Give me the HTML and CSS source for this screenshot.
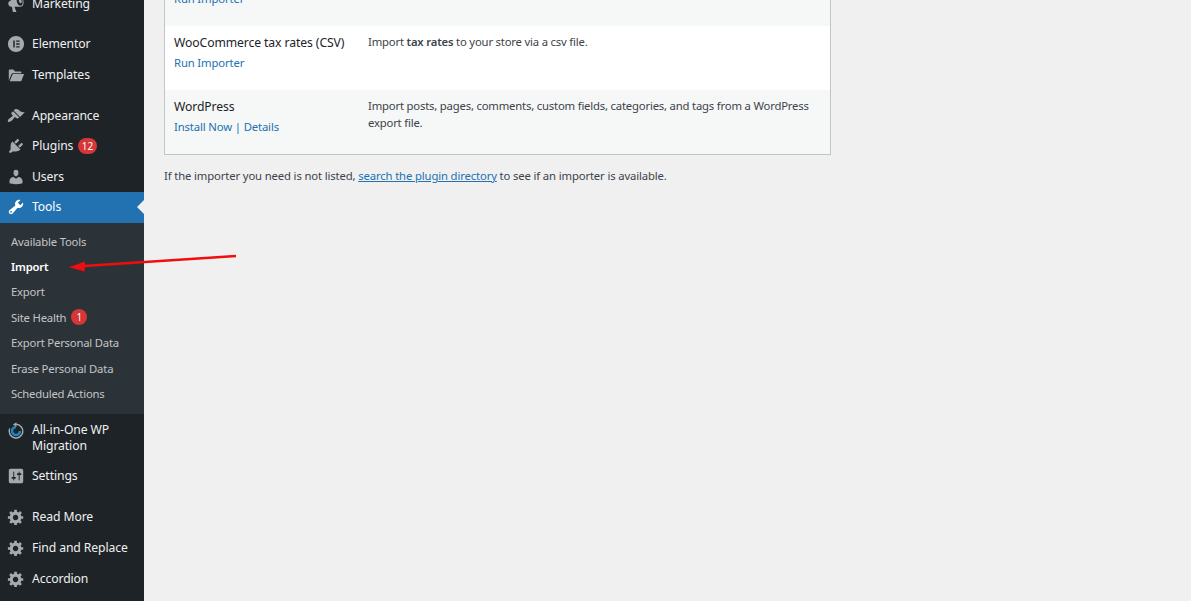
FILE: index.html
```html
<!DOCTYPE html>
<html lang="en">
<head>
<meta charset="utf-8">
<title>Import</title>
<link rel="stylesheet" href="styles.css">
</head>
<body>
<div class="page">
  <nav class="sidebar">
    <ul class="menu">
      <li class="item first"><svg class="ico" viewBox="0 0 20 20"><path d="M18.15 5.94c.46 1.62.38 3.22-.02 4.48-.42 1.28-1.26 2.18-2.3 2.48-.16.06-.26.06-.4.06-.06.02-.12.02-.18.02-.06.02-.14.02-.22.02h-6.8l2.22 5.5c.02.14-.06.26-.14.34-.08.1-.24.16-.34.16H6.95c-.1 0-.26-.06-.34-.16-.08-.08-.16-.2-.14-.34l-1-5.5H4.25l-.02-.02c-.5.06-1.08-.18-1.54-.62s-.88-1.08-1.06-1.88c-.24-.8-.2-1.56-.02-2.2.18-.62.58-1.08 1.06-1.3l.02-.02 9-5.4c.1-.06.18-.1.24-.16.06-.04.14-.08.24-.12.16-.08.28-.12.5-.18 1.04-.3 2.24.1 3.22 1 .98.88 1.8 2.24 2.26 3.86zm-2.58 5.98h-.02c.4-.1.74-.34 1.04-.7.58-.7.86-1.76.86-3.04-.02-.64-.12-1.3-.3-2-.2-.7-.44-1.36-.78-1.92-.34-.56-.7-1.02-1.1-1.38-.8-.72-1.72-1.04-2.54-.82-.82.22-1.44.96-1.74 1.98-.14.52-.22 1.1-.22 1.74.02.64.12 1.32.3 2 .2.7.46 1.36.78 1.9.34.56.72 1.02 1.12 1.38.4.34.82.58 1.24.7.46.14.9.16 1.36.06v.1zm-2.24-5.04c-.14-.54-.1-1.12.06-1.5.16-.4.44-.66.84-.72.4-.08.82.12 1.2.5.38.36.7.94.86 1.56.16.64.14 1.2-.04 1.6-.16.38-.44.64-.84.72-.4.06-.82-.14-1.2-.5-.38-.38-.7-.96-.88-1.66z"/></svg><span>Marketing</span></li>
      <li class="item gap"><svg class="ico" viewBox="0 0 20 20"><path fill-rule="evenodd" d="M10 1a9 9 0 1 0 0 18 9 9 0 0 0 0-18zM7 6h1.6v8H7zm3.2 0H14v1.6h-3.8zm0 3.2H14v1.6h-3.8zm0 3.2H14V14h-3.8z"/></svg><span>Elementor</span></li>
      <li class="item"><svg class="ico" viewBox="0 0 20 20"><path d="M2 16V5c0-.6.4-1 1-1h4l2 2h6c.6 0 1 .4 1 1v1H6.4c-.6 0-1.1.3-1.3.8z"/><path d="M3 17l3-7.3c.1-.4.5-.7.9-.7H19l-3 7.3c-.1.4-.5.7-.9.7z"/></svg><span>Templates</span></li>
      <li class="item gap2"><svg class="ico" viewBox="0 0 20 20"><path d="M14.48 11.06L7.41 3.99l1.5-1.5c.5-.56 2.3-.47 3.51.32 1.21.8 1.43 1.28 2.91 2.1 1.18.64 2.45 1.26 4.45.85zm-.71.71L6.7 4.7 4.93 6.47c-.39.39-.39 1.02 0 1.41l1.06 1.06c.39.39.39 1.03 0 1.42-.6.6-1.43 1.11-2.21 1.69-.35.26-.7.53-1.01.84C1.43 13.23.4 15.75 1.1 16.45c.7.7 3.22-.33 4.56-1.67.31-.31.58-.66.84-1.01.58-.78 1.09-1.61 1.69-2.21.39-.39 1.02-.39 1.41 0l1.06 1.06c.39.39 1.02.39 1.41 0z"/></svg><span>Appearance</span></li>
      <li class="item"><svg class="ico" viewBox="0 0 20 20"><path d="M13.11 4.36L9.87 7.6 8 5.73l3.24-3.24c.35-.34 1.05-.2 1.56.32.52.51.66 1.21.31 1.55zm-8 1.77l.91-1.12 9.01 9.01-1.19.84c-.71.71-2.63 1.16-3.82 1.16H6.14L4.9 17.26c-.59.59-1.54.59-2.12 0-.59-.58-.59-1.53 0-2.12l1.24-1.24v-3.88c0-1.13.4-3.19 1.09-3.89zm7.26 3.97l3.24-3.24c.34-.35 1.04-.21 1.55.31.52.51.66 1.21.31 1.55l-3.24 3.25z"/></svg><span>Plugins</span><b class="badge">12</b></li>
      <li class="item"><svg class="ico" viewBox="0 0 20 20"><path d="M10 9.25c-2.27 0-2.73-3.44-2.73-3.44C7 4.02 7.82 2 9.97 2c2.16 0 2.98 2.02 2.71 3.81 0 0-.41 3.44-2.68 3.44zm0 2.57L12.72 10c2.39 0 4.52 2.33 4.52 4.53v2.49s-3.65 1.13-7.24 1.13c-3.65 0-7.24-1.13-7.24-1.13v-2.49c0-2.25 1.94-4.48 4.47-4.48z"/></svg><span>Users</span></li>
      <li class="item current"><svg class="ico" viewBox="0 0 20 20"><path d="M16.68 9.77c-1.34 1.34-3.3 1.67-4.95.99l-5.41 6.52c-.99.99-2.59.99-3.58 0s-.99-2.59 0-3.57l6.52-5.42c-.68-1.65-.35-3.61.99-4.95 1.28-1.28 3.12-1.62 4.72-1.06l-2.89 2.89 2.82 2.82 2.86-2.87c.53 1.58.18 3.39-1.08 4.65zM3.81 16.21c.4.39 1.04.39 1.43 0 .4-.4.4-1.04 0-1.43-.39-.4-1.03-.4-1.43 0-.39.39-.39 1.03 0 1.43z"/></svg><span>Tools</span></li>
    </ul>
    <ul class="sub">
      <li>Available Tools</li>
      <li class="on">Import</li>
      <li>Export</li>
      <li>Site Health<b class="badge round">1</b></li>
      <li>Export Personal Data</li>
      <li>Erase Personal Data</li>
      <li>Scheduled Actions</li>
    </ul>
    <ul class="menu">
      <li class="item tall"><svg class="ico" viewBox="0 0 20 20"><path class="ring" d="M10 2.6a7.6 7.6 0 1 1-7 4.6"/><path d="M10.5.2 6.6 2.8l3.9 2.4z"/><path class="arc" d="M10 5.6a4.4 4.4 0 1 0 4.4 4.4"/></svg><span>All-in-One WP Migration</span></li>
      <li class="item"><svg class="ico" viewBox="0 0 20 20"><path d="M18 16V4c0-1.1-.9-2-2-2H4c-1.1 0-2 .9-2 2v12c0 1.1.9 2 2 2h12c1.1 0 2-.9 2-2zM8 11h1c.55 0 1 .45 1 1s-.45 1-1 1H8v1.5c0 .28-.22.5-.5.5s-.5-.22-.5-.5V13H6c-.55 0-1-.45-1-1s.45-1 1-1h1V5.5c0-.28.22-.5.5-.5s.5.22.5.5V11zm5-2h-1c-.55 0-1-.45-1-1s.45-1 1-1h1V5.5c0-.28.22-.5.5-.5s.5.22.5.5V7h1c.55 0 1 .45 1 1s-.45 1-1 1h-1v5.5c0 .28-.22.5-.5.5s-.5-.22-.5-.5V9z"/></svg><span>Settings</span></li>
      <li class="item gap3"><svg class="ico" viewBox="0 0 20 20"><path d="M18 12h-2.18c-.17.7-.44 1.35-.81 1.93l1.54 1.54-2.1 2.1-1.54-1.54c-.58.36-1.23.63-1.91.79V19H8v-2.18c-.68-.16-1.33-.43-1.91-.79l-1.54 1.54-2.12-2.12 1.54-1.54c-.36-.58-.63-1.23-.79-1.91H1V9.03h2.17c.16-.7.44-1.35.8-1.94L2.43 5.55l2.1-2.1 1.54 1.54c.58-.37 1.24-.64 1.93-.81V2h3v2.18c.68.16 1.33.43 1.91.79l1.54-1.54 2.12 2.12-1.54 1.54c.36.59.64 1.24.8 1.94H18V12zm-8.5 1.5c1.66 0 3-1.34 3-3s-1.34-3-3-3-3 1.34-3 3 1.34 3 3 3z"/></svg><span>Read More</span></li>
      <li class="item"><svg class="ico" viewBox="0 0 20 20"><path d="M18 12h-2.18c-.17.7-.44 1.35-.81 1.93l1.54 1.54-2.1 2.1-1.54-1.54c-.58.36-1.23.63-1.91.79V19H8v-2.18c-.68-.16-1.33-.43-1.91-.79l-1.54 1.54-2.12-2.12 1.54-1.54c-.36-.58-.63-1.23-.79-1.91H1V9.03h2.17c.16-.7.44-1.35.8-1.94L2.43 5.55l2.1-2.1 1.54 1.54c.58-.37 1.24-.64 1.93-.81V2h3v2.18c.68.16 1.33.43 1.91.79l1.54-1.54 2.12 2.12-1.54 1.54c.36.59.64 1.24.8 1.94H18V12zm-8.5 1.5c1.66 0 3-1.34 3-3s-1.34-3-3-3-3 1.34-3 3 1.34 3 3 3z"/></svg><span>Find and Replace</span></li>
      <li class="item"><svg class="ico" viewBox="0 0 20 20"><path d="M18 12h-2.18c-.17.7-.44 1.35-.81 1.93l1.54 1.54-2.1 2.1-1.54-1.54c-.58.36-1.23.63-1.91.79V19H8v-2.18c-.68-.16-1.33-.43-1.91-.79l-1.54 1.54-2.12-2.12 1.54-1.54c-.36-.58-.63-1.23-.79-1.91H1V9.03h2.17c.16-.7.44-1.35.8-1.94L2.43 5.55l2.1-2.1 1.54 1.54c.58-.37 1.24-.64 1.93-.81V2h3v2.18c.68.16 1.33.43 1.91.79l1.54-1.54 2.12 2.12-1.54 1.54c.36.59.64 1.24.8 1.94H18V12zm-8.5 1.5c1.66 0 3-1.34 3-3s-1.34-3-3-3-3 1.34-3 3 1.34 3 3 3z"/></svg><span>Accordion</span></li>
    </ul>
  </nav>
  <main class="main">
    <div class="table">
      <div class="row alt">
        <div class="name"><span class="title">WooCommerce products (CSV)</span><a class="link">Run Importer</a></div>
        <p class="desc">Import <strong>products</strong> to your store via a csv file.</p>
      </div>
      <div class="row">
        <div class="name"><span class="title">WooCommerce tax rates (CSV)</span><a class="link">Run Importer</a></div>
        <p class="desc">Import <strong>tax rates</strong> to your store via a csv file.</p>
      </div>
      <div class="row alt">
        <div class="name"><span class="title">WordPress</span><span class="actions"><a class="link">Install Now</a> | <a class="link">Details</a></span></div>
        <p class="desc">Import posts, pages, comments, custom fields, categories, and tags from a WordPress export file.</p>
      </div>
    </div>
    <p class="note">If the importer you need is not listed, <a class="under">search the plugin directory</a> to see if an importer is available.</p>
  </main>
  <svg class="arrow" viewBox="0 0 240 24" width="240" height="24"><path class="shaft" d="M236 3 84 13"/><path d="M69 14.2 85 8.5 84.6 18.5z"/></svg>
</div>
</body>
</html>
```

FILE: styles.css
```css
* { box-sizing: border-box; }
html, body { margin: 0; height: 100%; overflow: hidden; }
body { background: #f0f0f1; font-family: "Noto Sans", "Open Sans", sans-serif; font-size: 11.3px; letter-spacing: -0.14px; color: #3c434a; }
ul { list-style: none; margin: 0; padding: 0; }
.page { display: flex; position: relative; height: 601px; overflow: hidden; }
.sidebar { width: 144px; height: 601px; flex: none; background: #1d2327; overflow: hidden; }
.menu:first-child { margin-top: -11.2px; }
.item { display: flex; align-items: center; min-height: 30.6px; color: #f0f0f1; font-size: 12.2px; letter-spacing: -0.1px; line-height: 16px; padding-left: 7px; position: relative; }
.item.gap { margin-top: 9.5px; }
.item.gap2 { margin-top: 10.2px; }
.item.gap3 { margin-top: 10.3px; }
.item.tall { padding-top: 8px; padding-bottom: 7.5px; align-items: flex-start; }
.item.tall span { width: 100px; }
.ico { width: 18px; height: 18px; fill: #a7aaad; flex: none; margin-right: 7px; }
.ring { fill: none; stroke: #a7aaad; stroke-width: 1.6; }
.arc { fill: none; stroke: #1b86c4; stroke-width: 2.8; }
.current { background: #2271b1; color: #fff; }
.current .ico { fill: #fff; }
.current::after { content: ""; position: absolute; right: 0; top: 50%; margin-top: -7px; border: 7px solid transparent; border-right-color: #f0f0f1; border-left: 0; }
.badge { display: inline-block; margin-left: 5px; min-width: 16px; height: 16px; padding: 0 3.5px; border-radius: 8px; background: #d63638; color: #fff; font-size: 10px; letter-spacing: 0; font-weight: 400; line-height: 16px; text-align: center; }
.badge.round { padding: 0; }
.sub { background: #2c3338; padding: 5.8px 0 7.5px; color: #c3c4c7; font-size: 11.3px; letter-spacing: -0.2px; }
.sub li { display: flex; align-items: center; height: 25.4px; padding-left: 11px; }
.sub .on { color: #fff; font-weight: 600; }
.main { flex: 1; padding: 0 0 0 20px; min-width: 0; }
.table { width: 667px; margin-top: -39px; border: 1px solid #c3c4c7; background: #fff; }
.row { display: flex; height: 64px; padding-top: 8px; }
.alt { background: #f6f7f7; }
.name { width: 203px; flex: none; padding-left: 9px; display: flex; flex-direction: column; }
.title { color: #1d2327; font-size: 12.2px; letter-spacing: -0.1px; line-height: 17px; }
.link, .actions { color: #2271b1; }
.name .link, .actions { margin-top: 4px; line-height: 16px; }
.actions .link { margin: 0; }
.desc { margin: -1px 0 0; width: 450px; line-height: 17px; letter-spacing: -0.19px; }
.desc strong { font-weight: 600; }
.note { margin: 13px 0 0; line-height: 16px; }
.under { color: #2271b1; text-decoration: underline; }
.arrow { position: absolute; left: 0; top: 253px; fill: #f00d0d; }
.shaft { fill: none; stroke: #f00d0d; stroke-width: 2.4; }
```
